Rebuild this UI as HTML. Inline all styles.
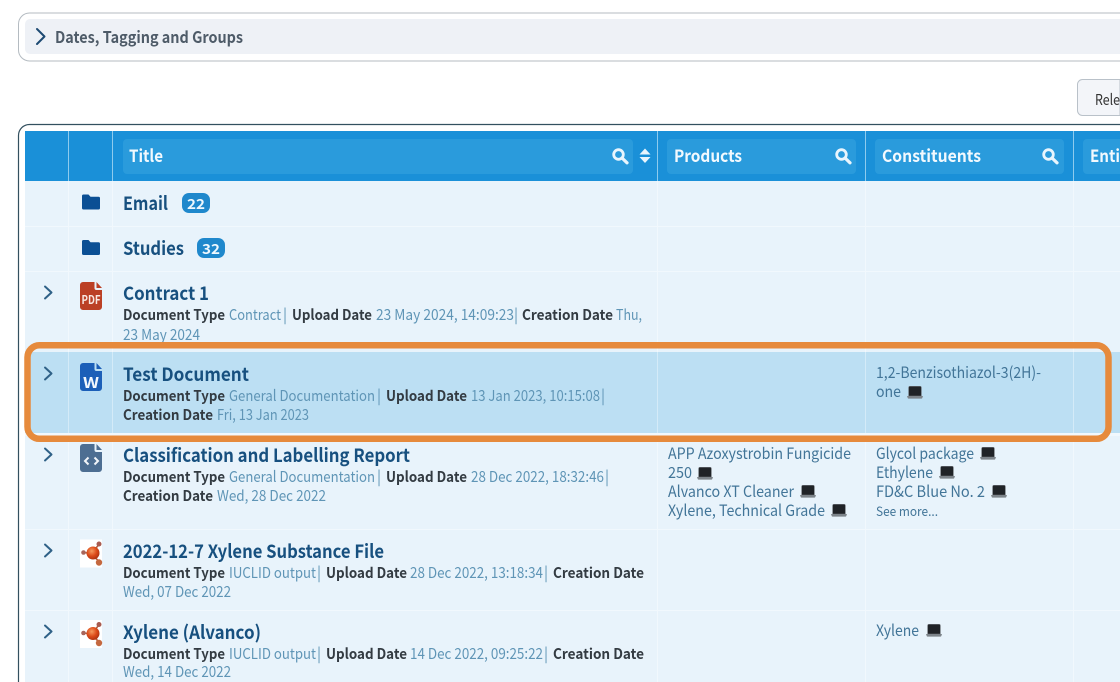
<!DOCTYPE html>
<html lang="en"><head><meta charset="utf-8"><title>Documents</title>
<style>
html,body{margin:0;padding:0;background:#fff;width:1120px;height:682px;overflow:hidden}
svg{display:block;position:absolute;left:0;top:0;overflow:hidden}
text{font-family:"Noto Sans CJK JP","Liberation Sans",sans-serif;transform:translateY(0.8px)}
.h{font-size:17px;font-weight:700;fill:#f2f9fe}
.t{font-size:18.5px;font-weight:700;fill:#17507f}
.b{font-size:14.5px;font-weight:700;fill:#333b42}
.v{font-size:15px;font-weight:400;fill:#5f95b6}
.l{font-size:15.5px;font-weight:400;fill:#427598}
</style></head><body>
<svg width="1120" height="682" viewBox="0 0 1120 682" xmlns="http://www.w3.org/2000/svg">
<defs>
<radialGradient id="ball" cx="40%" cy="35%" r="70%"><stop offset="0" stop-color="#f59a5e"/><stop offset=".55" stop-color="#dc4a18"/><stop offset="1" stop-color="#a8300f"/></radialGradient>
<g id="lap"><path d="M2.800 0.300h10.400a1.200 1.200 0 0 1 1.200 1.200v8.500h-12.800v-8.500a1.200 1.200 0 0 1 1.200-1.200z" fill="#202327" stroke="#74797e" stroke-width=".5"/><path d="M0 10h16l-0.700 2a1 1 0 0 1-.9.600H1.600a1 1 0 0 1-.9-.6z" fill="#7d848a"/></g>
<g id="chev"><path d="M1 1l6.500 6-6.500 6" fill="none" stroke="#2f6187" stroke-width="2" stroke-linecap="round" stroke-linejoin="round"/></g>
<g id="mag"><circle cx="6.500" cy="6.500" r="4.800" fill="none" stroke="#e9f5fd" stroke-width="2.800"/><path d="M10 10l5 4.800" stroke="#e9f5fd" stroke-width="3.200" stroke-linecap="round"/></g>
<g id="folder"><path d="M0 2a1.500 1.500 0 0 1 1.500-1.500h5l2 2.200h8a1.500 1.500 0 0 1 1.500 1.500v9.800a1.500 1.500 0 0 1-1.500 1.500h-15a1.500 1.500 0 0 1-1.500-1.500z" fill="#0b4f94"/></g>
<g id="mol"><rect width="22" height="28" fill="#fff"/><path d="M11 14L4 13M13 12l6-7M13 16l6 6" stroke="#b0603f" stroke-width="1.600"/><circle cx="13" cy="13.500" r="6.500" fill="url(#ball)"/><circle cx="3.500" cy="13" r="2.300" fill="#a9655a"/><circle cx="19" cy="4.500" r="2.500" fill="#a95c50"/><circle cx="19" cy="23" r="3.200" fill="#c4683f"/></g>
</defs>

<!-- top panel -->
<path d="M1120 13H29.500a11 11 0 0 0-11 11v26a11 11 0 0 0 11 11H1120" fill="#fff" stroke="#b4bbc1" stroke-width="1"/>
<path d="M1120 19H30a5 5 0 0 0-5 5v25a5 5 0 0 0 5 5h1090z" fill="#eef1f6"/>
<path d="M37 29l7.500 7.500-7.500 7.500" fill="none" stroke="#1d4a72" stroke-width="2" stroke-linecap="round" stroke-linejoin="round"/>
<text x="55" y="42" font-size="16" font-weight="700" fill="#4e5b68" textLength="188" lengthAdjust="spacingAndGlyphs">Dates, Tagging and Groups</text>

<!-- release button -->
<path d="M1120 79.500h-37.500a5 5 0 0 0-5 5v26a5 5 0 0 0 5 5H1120z" fill="#f3f5f9" stroke="#b9c1c9"/>
<text x="1095" y="104" font-size="15" fill="#333" textLength="25" lengthAdjust="spacingAndGlyphs">Rele</text>

<!-- table panel -->
<path d="M1120 124.500H29.500a11 11 0 0 0-11 11V682" fill="none" stroke="#33505f" stroke-width="1.200"/>
<rect x="25" y="131" width="1095" height="551" fill="#e8f3fb"/>
<rect x="25" y="131" width="1095" height="50" fill="#1a90d8"/>

<!-- highlighted row -->
<rect x="25" y="352" width="1095" height="81" fill="#bcdff3"/>

<!-- grid lines -->
<g fill="#f1f8fd">
<rect x="25" y="226" width="1095" height="1"/>
<rect x="25" y="271" width="1095" height="1"/>
<rect x="25" y="433" width="1095" height="3"/>
<rect x="25" y="529" width="1095" height="1"/>
<rect x="25" y="610" width="1095" height="1"/>
<rect x="68" y="181" width="1" height="171"/>
<rect x="112" y="181" width="1" height="171"/>
<rect x="657" y="181" width="1" height="171"/>
<rect x="865" y="181" width="1" height="171"/>
<rect x="1073" y="181" width="1" height="171"/>
<rect x="68" y="433" width="1" height="249"/>
<rect x="112" y="433" width="1" height="249"/>
<rect x="657" y="433" width="1" height="249"/>
<rect x="865" y="433" width="1" height="249"/>
<rect x="1073" y="433" width="1" height="249"/>
</g>
<g fill="#d4ebf8">
<rect x="68" y="352" width="1" height="81"/>
<rect x="112" y="352" width="1" height="81"/>
<rect x="657" y="352" width="1" height="81"/>
<rect x="865" y="352" width="1" height="81"/>
<rect x="1073" y="352" width="1" height="81"/>
</g>
<g fill="#8ecbee">
<rect x="68" y="131" width="1" height="50"/>
<rect x="112" y="131" width="1" height="50"/>
<rect x="657" y="131" width="1" height="50"/>
<rect x="865" y="131" width="1" height="50"/>
<rect x="1073" y="131" width="1" height="50"/>
</g>

<!-- header boxes -->
<g fill="#2a9bdc">
<rect x="123" y="139" width="510" height="35" rx="4"/>
<rect x="667" y="139" width="189" height="35" rx="4"/>
<rect x="875" y="139" width="189" height="35" rx="4"/>
<path d="M1120 139h-33a4 4 0 0 0-4 4v27a4 4 0 0 0 4 4h33z"/>
</g>
<text class="h" x="129" y="161" textLength="34" lengthAdjust="spacingAndGlyphs">Title</text>
<text class="h" x="674" y="161" textLength="68" lengthAdjust="spacingAndGlyphs">Products</text>
<text class="h" x="882" y="161" textLength="99" lengthAdjust="spacingAndGlyphs">Constituents</text>
<text class="h" x="1090" y="161" textLength="30" lengthAdjust="spacingAndGlyphs">Enti</text>
<use href="#mag" x="612" y="148"/><use href="#mag" x="835" y="148"/><use href="#mag" x="1042" y="148"/>
<path d="M645 148.500l5.500 6h-11zM645 163l-5.500-6h11z" fill="#e9f5fd"/>

<!-- rows -->
<use href="#folder" x="82" y="194"/><use href="#folder" x="82" y="239.500"/>
<text class="t" x="123" y="209" textLength="45" lengthAdjust="spacingAndGlyphs">Email</text>
<rect x="182" y="193" width="28" height="20" rx="7" fill="#1f88cc"/>
<text x="187" y="208" font-size="14" font-weight="700" fill="#eef8fe" textLength="18" lengthAdjust="spacingAndGlyphs">22</text>
<text class="t" x="123" y="254" textLength="61" lengthAdjust="spacingAndGlyphs">Studies</text>
<rect x="197" y="238" width="28" height="20" rx="7" fill="#1f88cc"/>
<text x="202" y="253" font-size="14" font-weight="700" fill="#eef8fe" textLength="18" lengthAdjust="spacingAndGlyphs">32</text>

<!-- Contract 1 -->
<use href="#chev" x="44" y="285.500"/>
<path d="M83 282h11.500v6a2 2 0 0 0 2 2h5.500v17a3 3 0 0 1-3 3h-16a3 3 0 0 1-3-3v-22a3 3 0 0 1 3-3z" fill="#bb4025"/><path d="M96.500 282l5.500 6h-5.500z" fill="#bb4025"/>
<text x="81.500" y="303" font-size="12" font-weight="700" fill="#f8e8e2" textLength="19" lengthAdjust="spacingAndGlyphs">PDF</text>
<text class="t" x="123" y="299" textLength="86" lengthAdjust="spacingAndGlyphs">Contract 1</text>
<text class="b" x="123" y="319" textLength="102" lengthAdjust="spacingAndGlyphs">Document Type</text>
<text class="v" x="229" y="319" textLength="52" lengthAdjust="spacingAndGlyphs">Contract</text>
<text class="v" x="283" y="319">|</text>
<text class="b" x="292" y="319" textLength="80" lengthAdjust="spacingAndGlyphs">Upload Date</text>
<text class="v" x="376" y="319" textLength="138" lengthAdjust="spacingAndGlyphs">23 May 2024, 14:09:23</text>
<text class="v" x="514" y="319">|</text>
<text class="b" x="522" y="319" textLength="91" lengthAdjust="spacingAndGlyphs">Creation Date</text>
<text class="v" x="616" y="319" textLength="26" lengthAdjust="spacingAndGlyphs">Thu,</text>
<text class="v" x="123" y="339" textLength="77" lengthAdjust="spacingAndGlyphs">23 May 2024</text>

<!-- Test Document -->
<use href="#chev" x="44" y="366.500"/>
<path d="M83 363h11.500v6a2 2 0 0 0 2 2h5.500v17a3 3 0 0 1-3 3h-16a3 3 0 0 1-3-3v-22a3 3 0 0 1 3-3z" fill="#1c5fb8"/><path d="M96.500 363l5.500 6h-5.500z" fill="#1c5fb8"/>
<text x="83" y="387" font-size="15" font-weight="700" fill="#f2f7fd" textLength="16" lengthAdjust="spacingAndGlyphs">W</text>
<text class="t" x="123" y="380" textLength="126" lengthAdjust="spacingAndGlyphs">Test Document</text>
<text class="b" x="123" y="400" textLength="102" lengthAdjust="spacingAndGlyphs">Document Type</text>
<text class="v" x="229" y="400" textLength="146" lengthAdjust="spacingAndGlyphs">General Documentation</text>
<text class="v" x="377" y="400">|</text>
<text class="b" x="386" y="400" textLength="81" lengthAdjust="spacingAndGlyphs">Upload Date</text>
<text class="v" x="471" y="400" textLength="129" lengthAdjust="spacingAndGlyphs">13 Jan 2023, 10:15:08</text>
<text class="v" x="601" y="400">|</text>
<text class="b" x="123" y="419" textLength="90" lengthAdjust="spacingAndGlyphs">Creation Date</text>
<text class="v" x="217" y="419" textLength="92" lengthAdjust="spacingAndGlyphs">Fri, 13 Jan 2023</text>
<text class="l" x="876" y="377" textLength="165" lengthAdjust="spacingAndGlyphs">1,2-Benzisothiazol-3(2H)-</text>
<text class="l" x="876" y="396" textLength="25" lengthAdjust="spacingAndGlyphs">one</text>
<use href="#lap" x="907" y="386"/>

<!-- Classification -->
<use href="#chev" x="44" y="447.500"/>
<path d="M83 444h11.500v6a2 2 0 0 0 2 2h5.500v17a3 3 0 0 1-3 3h-16a3 3 0 0 1-3-3v-22a3 3 0 0 1 3-3z" fill="#4d6e92"/><path d="M96.500 444l5.500 6h-5.500z" fill="#4d6e92"/>
<path d="M88.500 457.500l-3.500 3.500 3.500 3.500M94.500 457.500l3.500 3.500-3.500 3.500" fill="none" stroke="#f2f5f9" stroke-width="2"/>
<text class="t" x="123" y="461" textLength="287" lengthAdjust="spacingAndGlyphs">Classification and Labelling Report</text>
<text class="b" x="123" y="481" textLength="102" lengthAdjust="spacingAndGlyphs">Document Type</text>
<text class="v" x="229" y="481" textLength="146" lengthAdjust="spacingAndGlyphs">General Documentation</text>
<text class="v" x="377" y="481">|</text>
<text class="b" x="386" y="481" textLength="81" lengthAdjust="spacingAndGlyphs">Upload Date</text>
<text class="v" x="471" y="481" textLength="133" lengthAdjust="spacingAndGlyphs">28 Dec 2022, 18:32:46</text>
<text class="v" x="605" y="481">|</text>
<text class="b" x="123" y="500" textLength="90" lengthAdjust="spacingAndGlyphs">Creation Date</text>
<text class="v" x="217" y="500" textLength="109" lengthAdjust="spacingAndGlyphs">Wed, 28 Dec 2022</text>
<text class="l" x="668" y="458" textLength="183" lengthAdjust="spacingAndGlyphs">APP Azoxystrobin Fungicide</text>
<text class="l" x="668" y="477" textLength="24" lengthAdjust="spacingAndGlyphs">250</text>
<use href="#lap" x="697" y="467"/>
<text class="l" x="668" y="496" textLength="126" lengthAdjust="spacingAndGlyphs">Alvanco XT Cleaner</text>
<use href="#lap" x="800" y="485"/>
<text class="l" x="668" y="515" textLength="157" lengthAdjust="spacingAndGlyphs">Xylene, Technical Grade</text>
<use href="#lap" x="831" y="504"/>
<text class="l" x="876" y="458" textLength="98" lengthAdjust="spacingAndGlyphs">Glycol package</text>
<use href="#lap" x="980" y="447"/>
<text class="l" x="876" y="477" textLength="57" lengthAdjust="spacingAndGlyphs">Ethylene</text>
<use href="#lap" x="939" y="466"/>
<text class="l" x="876" y="496" textLength="109" lengthAdjust="spacingAndGlyphs">FD&amp;C Blue No. 2</text>
<use href="#lap" x="991" y="485"/>
<text x="876" y="515" font-size="13" fill="#427598" textLength="62" lengthAdjust="spacingAndGlyphs">See more...</text>

<!-- 2022-12-7 -->
<use href="#chev" x="44" y="543.500"/>
<use href="#mol" x="80" y="539.500"/>
<text class="t" x="123" y="557" textLength="261" lengthAdjust="spacingAndGlyphs">2022-12-7 Xylene Substance File</text>
<text class="b" x="123" y="577" textLength="102" lengthAdjust="spacingAndGlyphs">Document Type</text>
<text class="v" x="229" y="577" textLength="87" lengthAdjust="spacingAndGlyphs">IUCLID output</text>
<text class="v" x="317" y="577">|</text>
<text class="b" x="326" y="577" textLength="81" lengthAdjust="spacingAndGlyphs">Upload Date</text>
<text class="v" x="410" y="577" textLength="133" lengthAdjust="spacingAndGlyphs">28 Dec 2022, 13:18:34</text>
<text class="v" x="544" y="577">|</text>
<text class="b" x="553" y="577" textLength="91" lengthAdjust="spacingAndGlyphs">Creation Date</text>
<text class="v" x="123" y="596" textLength="108" lengthAdjust="spacingAndGlyphs">Wed, 07 Dec 2022</text>

<!-- Xylene (Alvanco) -->
<use href="#chev" x="44" y="624.500"/>
<use href="#mol" x="80" y="620"/>
<text class="t" x="123" y="638" textLength="138" lengthAdjust="spacingAndGlyphs">Xylene (Alvanco)</text>
<text class="b" x="123" y="658" textLength="102" lengthAdjust="spacingAndGlyphs">Document Type</text>
<text class="v" x="229" y="658" textLength="87" lengthAdjust="spacingAndGlyphs">IUCLID output</text>
<text class="v" x="317" y="658">|</text>
<text class="b" x="326" y="658" textLength="81" lengthAdjust="spacingAndGlyphs">Upload Date</text>
<text class="v" x="410" y="658" textLength="133" lengthAdjust="spacingAndGlyphs">14 Dec 2022, 09:25:22</text>
<text class="v" x="544" y="658">|</text>
<text class="b" x="553" y="658" textLength="91" lengthAdjust="spacingAndGlyphs">Creation Date</text>
<text class="v" x="123" y="676" textLength="108" lengthAdjust="spacingAndGlyphs">Wed, 14 Dec 2022</text>
<text class="l" x="876" y="635" textLength="43" lengthAdjust="spacingAndGlyphs">Xylene</text>
<use href="#lap" x="926" y="624"/>

<!-- orange callout -->
<rect x="27.500" y="345.300" width="1081" height="93.500" rx="12" fill="none" stroke="#e68a3c" stroke-width="6.500"/>
</svg>
</body></html>
